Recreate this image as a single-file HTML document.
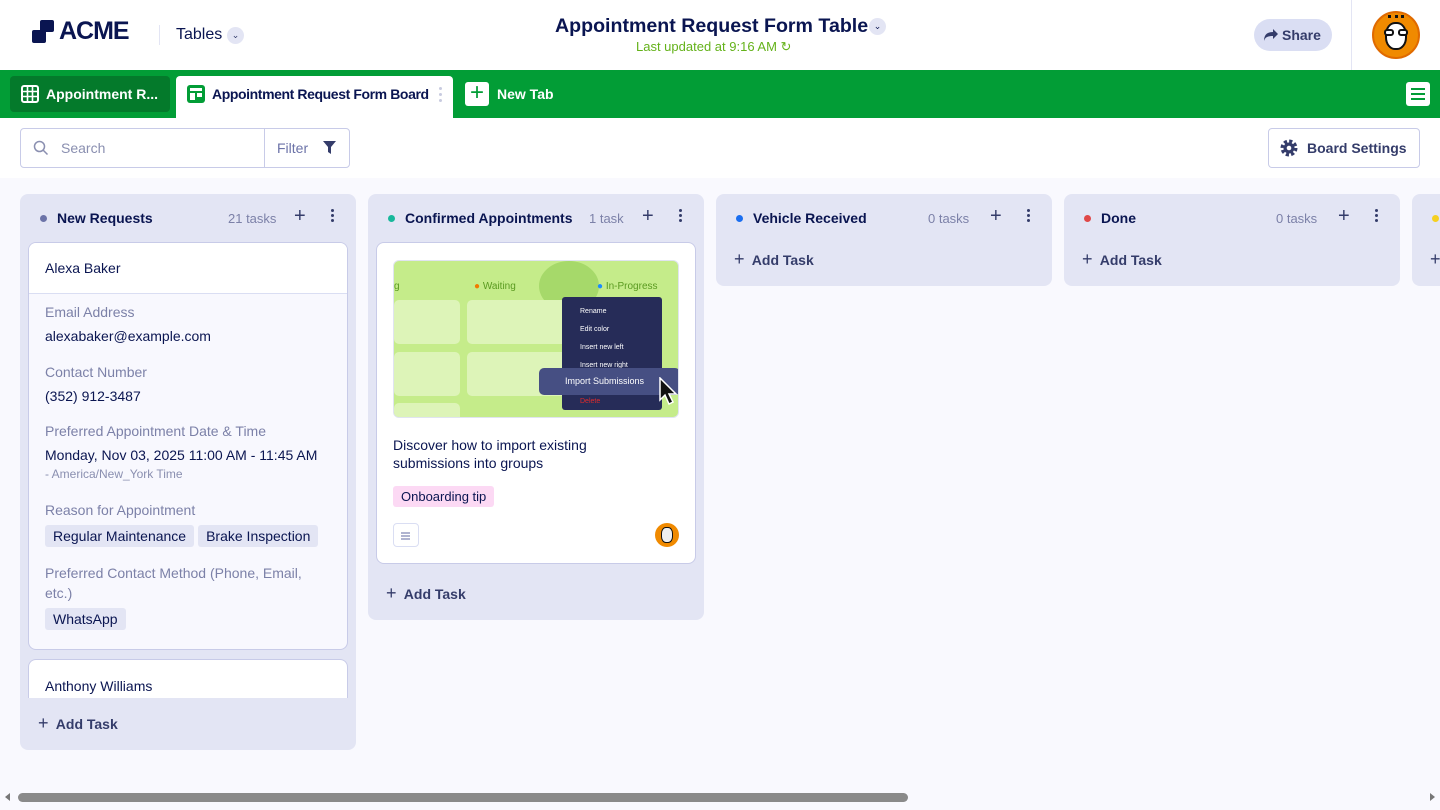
<!DOCTYPE html>
<html><head><meta charset="utf-8"><style>
*{box-sizing:border-box;margin:0;padding:0}
body{width:1440px;height:810px;overflow:hidden;background:#f9f9fe;font-family:"Liberation Sans",sans-serif;color:#0a1551;position:relative}
.hdr{position:absolute;left:0;top:0;width:1440px;height:70px;background:#fff}
.tabs{position:absolute;left:0;top:70px;width:1440px;height:48px;background:#029d36}
.toolbar{position:absolute;left:0;top:118px;width:1440px;height:60px;background:#fff}
.col{position:absolute;top:194px;width:336px;background:#e3e5f4;border-radius:8px}
.ch{position:absolute;top:16px;left:20px;right:16px;height:16px;font-size:14px;font-weight:bold;display:flex;align-items:center}
.dot{width:7px;height:7px;border-radius:50%;margin-right:10px}
.cnt{position:absolute;font-size:13px;color:#7c81a8;font-weight:normal;top:1px}
.plus{position:absolute;font-size:20px;font-weight:normal;color:#343c6a;top:-5px}
.kebab{position:absolute;top:-1px;width:3px}
.kebab i{display:block;width:3px;height:3px;border-radius:50%;background:#343c6a;margin-bottom:2px}
.add{position:absolute;font-size:14px;font-weight:bold;color:#343c6a}
.lab{font-size:14px;color:#7c81a8;margin-top:0}
.val{font-size:14px;color:#0a1551}
.tag{display:inline-block;background:#e3e5f4;border-radius:3px;padding:3px 8px;font-size:14px;margin-right:4px}
</style></head><body>
<div class="hdr">
  <svg style="position:absolute;left:31px;top:20px" width="26" height="24" viewBox="0 0 26 24"><rect x="9" y="0" width="14" height="12" rx="2" fill="#0a1551"/><rect x="1" y="10" width="14" height="13" rx="2" fill="#0a1551"/></svg>
  <div style="position:absolute;left:59px;top:17px;font-size:25px;font-weight:bold;letter-spacing:-1px;color:#0a1551">ACME</div>
  <div style="position:absolute;left:159px;top:25px;width:1px;height:20px;background:#e3e5f4"></div>
  <div style="position:absolute;left:176px;top:26px;font-size:16px">Tables</div>
  <div style="position:absolute;left:227px;top:27px;width:17px;height:17px;border-radius:50%;background:#e3e5f4;font-size:9px;text-align:center;line-height:17px;color:#343c6a">⌄</div>
  <div style="position:absolute;left:555px;top:15px;font-size:19.6px;font-weight:bold;color:#0a1551">Appointment Request Form Table</div>
  <div style="position:absolute;left:869px;top:18px;width:17px;height:17px;border-radius:50%;background:#e3e5f4;font-size:9px;text-align:center;line-height:17px">⌄</div>
  <div style="position:absolute;left:636px;top:39px;font-size:13px;color:#64b21a">Last updated at 9:16 AM ↻</div>
  <div style="position:absolute;left:1254px;top:19px;width:78px;height:32px;border-radius:16px;background:#dadef3;font-size:14px;font-weight:bold;color:#343c6a;line-height:32px;padding-left:28px">Share</div>
  <svg style="position:absolute;left:1263px;top:28px" width="16" height="14" viewBox="0 0 16 14"><path d="M10 1l5 5-5 5V8C5 8 2 9 1 13 1 7 4 4 10 4z" fill="#343c6a"/></svg>
  <div style="position:absolute;left:1351px;top:0;width:1px;height:70px;background:#e3e5f4"></div>
  <div style="position:absolute;left:1372px;top:11px;width:48px;height:48px;border-radius:50%;background:#f08a00;border:2px solid #e06a00"></div>
  <div style="position:absolute;left:1385px;top:22px;width:22px;height:28px;border-radius:45%;background:#fff;border:2px solid #111"></div>
  <div style="position:absolute;left:1384px;top:29px;width:10px;height:7px;border:2px solid #111;border-radius:3px;background:#fff"></div>
  <div style="position:absolute;left:1398px;top:29px;width:10px;height:7px;border:2px solid #111;border-radius:3px;background:#fff"></div>
  <div style="position:absolute;left:1388px;top:15px;width:16px;height:8px;border-top:3px dotted #111"></div>
</div>
<div class="tabs">
  <div style="position:absolute;left:10px;top:6px;width:160px;height:36px;background:#047a2b;border-radius:4px;color:#fff;font-size:14px;font-weight:bold;line-height:36px;padding-left:36px">Appointment R...</div>
  <svg style="position:absolute;left:21px;top:15px" width="18" height="18" viewBox="0 0 18 18"><rect x="1" y="1" width="16" height="16" rx="2" fill="none" stroke="#fff" stroke-width="2"/><path d="M1 6.5h16M1 11.5h16M6.5 1v16M11.5 1v16" stroke="#fff" stroke-width="1.6"/></svg>
  <div style="position:absolute;left:176px;top:6px;width:277px;height:42px;background:#fff;border-radius:4px 4px 0 0;font-size:14px;letter-spacing:-0.4px;font-weight:bold;line-height:36px;padding-left:36px">Appointment Request Form Board</div>
  <svg style="position:absolute;left:187px;top:15px" width="18" height="18" viewBox="0 0 18 18"><rect x="0" y="0" width="18" height="18" rx="3" fill="#029d36"/><rect x="3" y="3" width="12" height="3" fill="#fff"/><rect x="3" y="8" width="5" height="7" fill="#fff"/><rect x="10" y="8" width="5" height="4" fill="#fff"/></svg>
  <div style="position:absolute;left:439px;top:17px;width:3px"><i style="display:block;width:3px;height:3px;background:#c8cbe0;border-radius:50%;margin-bottom:3px"></i><i style="display:block;width:3px;height:3px;background:#c8cbe0;border-radius:50%;margin-bottom:3px"></i><i style="display:block;width:3px;height:3px;background:#c8cbe0;border-radius:50%"></i></div>
  <div style="position:absolute;left:465px;top:12px;width:24px;height:24px;background:#fff;border-radius:3px;color:#029d36;font-size:24px;line-height:22px;text-align:center">+</div>
  <div style="position:absolute;left:497px;top:16px;color:#fff;font-size:14px;font-weight:bold">New Tab</div>
  <div style="position:absolute;left:1406px;top:12px;width:24px;height:24px;background:#fff;border-radius:3px"><div style="margin:6px 5px;height:2px;background:#029d36;box-shadow:0 5px 0 #029d36,0 10px 0 #029d36"></div></div>
</div>
<div class="toolbar">
  <div style="position:absolute;left:20px;top:10px;width:330px;height:40px;border:1px solid #c8cbe8;border-radius:4px"></div>
  <div style="position:absolute;left:264px;top:10px;width:1px;height:40px;background:#c8cbe8"></div>
  <svg style="position:absolute;left:33px;top:22px" width="16" height="16" viewBox="0 0 16 16"><circle cx="6.5" cy="6.5" r="5" fill="none" stroke="#8a8fb0" stroke-width="1.5"/><path d="M10 10l4.5 4.5" stroke="#8a8fb0" stroke-width="1.5"/></svg>
  <div style="position:absolute;left:61px;top:22px;font-size:14px;color:#8a8fb0">Search</div>
  <div style="position:absolute;left:277px;top:22px;font-size:14px;color:#6c73a8">Filter</div>
  <svg style="position:absolute;left:323px;top:23px" width="13" height="13" viewBox="0 0 13 13"><path d="M0 0h13L8 6v7L5 11V6z" fill="#343c6a"/></svg>
  <div style="position:absolute;left:1268px;top:10px;width:152px;height:40px;border:1px solid #c8cbe8;border-radius:4px;font-size:14px;font-weight:bold;color:#343c6a;line-height:38px;padding-left:38px">Board Settings</div>
  <svg style="position:absolute;left:1279px;top:20px" width="20" height="20" viewBox="0 0 20 20"><circle cx="10" cy="10" r="6.5" fill="none" stroke="#343c6a" stroke-width="4" stroke-dasharray="3 2.1"/><circle cx="10" cy="10" r="5.5" fill="#343c6a"/><circle cx="10" cy="10" r="2.3" fill="#fff"/></svg>
</div>

<div class="col" style="left:20px;height:556px">
  <div class="ch"><span class="dot" style="background:#6c73a8"></span>New Requests<span class="cnt" style="left:188px">21 tasks</span><span class="plus" style="left:254px">+</span><span class="kebab" style="left:291px"><i></i><i></i><i></i></span></div>
  <div style="position:absolute;left:8px;top:48px;width:320px;height:408px;background:#f8f8fe;border:1px solid #c8cbe8;border-radius:8px;overflow:hidden">
    <div style="height:51px;background:#fff;border-bottom:1px solid #dadef3;padding:17px 16px;font-size:14px">Alexa Baker</div>
    <div style="padding:10px 16px">
      <div class="lab">Email Address</div><div class="val" style="margin-top:8px">alexabaker@example.com</div>
      <div class="lab" style="margin-top:20px">Contact Number</div><div class="val" style="margin-top:8px">(352) 912-3487</div>
      <div class="lab" style="margin-top:19px">Preferred Appointment Date &amp; Time</div><div class="val" style="margin-top:8px">Monday, Nov 03, 2025 11:00 AM - 11:45 AM</div>
      <div style="font-size:12px;color:#8a8fb0;margin-top:4px">- America/New_York Time</div>
      <div class="lab" style="margin-top:21px">Reason for Appointment</div>
      <div style="margin-top:7px"><span class="tag">Regular Maintenance</span><span class="tag">Brake Inspection</span></div>
      <div class="lab" style="margin-top:16px;line-height:20px">Preferred Contact Method (Phone, Email, etc.)</div>
      <div style="margin-top:5px"><span class="tag">WhatsApp</span></div>
    </div>
  </div>
  <div style="position:absolute;left:8px;top:465px;width:320px;height:39px;background:#fff;border:1px solid #c8cbe8;border-bottom:none;border-radius:8px 8px 0 0;padding:18px 16px 0;font-size:14px">Anthony Williams</div>
  <div class="add" style="left:18px;top:519px"><span style="font-weight:normal;font-size:18px">+</span>&nbsp; Add Task</div>
</div>

<div class="col" style="left:368px;height:426px">
  <div class="ch"><span class="dot" style="background:#18b89b"></span>Confirmed Appointments<span class="cnt" style="left:201px">1 task</span><span class="plus" style="left:254px">+</span><span class="kebab" style="left:291px"><i></i><i></i><i></i></span></div>
  <div style="position:absolute;left:8px;top:48px;width:320px;height:322px;background:#fff;border:1px solid #c8cbe8;border-radius:8px">
    <div style="position:absolute;left:16px;top:17px;width:286px;height:158px;background:#c5ec8a;border-radius:6px;overflow:hidden;border:1px solid #e0e4f0">
      <div style="position:absolute;left:145px;top:0;width:60px;height:50px;border-radius:50%;background:#a6d96a"></div>
      <div style="position:absolute;left:0;top:20px;font-size:10px;color:#5a9a20">g</div>
      <div style="position:absolute;left:80px;top:20px;font-size:10px;color:#5a9a20"><span style="color:#f07b00">●</span> Waiting</div>
      <div style="position:absolute;left:203px;top:20px;font-size:10px;color:#5a9a20"><span style="color:#1a8cff">●</span> In-Progress</div>
      <div style="position:absolute;left:0;top:39px;width:66px;height:44px;background:#ddf4b8;border-radius:5px"></div>
      <div style="position:absolute;left:73px;top:39px;width:100px;height:44px;background:#ddf4b8;border-radius:5px"></div>
      <div style="position:absolute;left:0;top:91px;width:66px;height:44px;background:#ddf4b8;border-radius:5px"></div>
      <div style="position:absolute;left:73px;top:91px;width:100px;height:44px;background:#ddf4b8;border-radius:5px"></div>
      <div style="position:absolute;left:0;top:142px;width:66px;height:20px;background:#ddf4b8;border-radius:5px"></div>
      <div style="position:absolute;left:168px;top:36px;width:100px;height:113px;background:#262c58;border-radius:3px;font-size:7px;color:#fff;padding:6px 0 0 18px;line-height:18px">Rename<br>Edit color<br>Insert new left<br>Insert new right<br><br><span style="color:#e02b2b">Delete</span></div>
      <div style="position:absolute;left:145px;top:107px;width:141px;height:27px;background:#464f83;border-radius:5px;color:#fff;font-size:9px;line-height:27px;padding-left:26px">Import Submissions</div>
      <svg style="position:absolute;left:264px;top:116px" width="20" height="30" viewBox="0 0 20 30"><path d="M2 1v22l5-5 4 9 4-2-4-8h7z" fill="#111" stroke="#fff" stroke-width="1.5"/></svg>
    </div>
    <div style="position:absolute;left:16px;top:193px;font-size:14px;line-height:18px;width:260px">Discover how to import existing submissions into groups</div>
    <div style="position:absolute;left:16px;top:243px;background:#fcd9f4;border-radius:3px;padding:3px 8px;font-size:13px">Onboarding tip</div>
    <div style="position:absolute;left:16px;top:280px;width:26px;height:24px;border:1px solid #dadef3;border-radius:4px"><div style="margin:8px 7px;width:9px;height:1.5px;background:#b0b4d0;box-shadow:0 3px 0 #b0b4d0,0 6px 0 #b0b4d0"></div></div>
    <div style="position:absolute;left:278px;top:280px;width:24px;height:24px;border-radius:50%;background:#f08a00"><div style="margin:4px 6px;width:12px;height:16px;background:#eee;border:1.5px solid #111;border-radius:40%"></div></div>
  </div>
  <div class="add" style="left:18px;top:389px"><span style="font-weight:normal;font-size:18px">+</span>&nbsp; Add Task</div>
</div>

<div class="col" style="left:716px;height:92px">
  <div class="ch"><span class="dot" style="background:#1a6ef0"></span>Vehicle Received<span class="cnt" style="left:192px">0 tasks</span><span class="plus" style="left:254px">+</span><span class="kebab" style="left:291px"><i></i><i></i><i></i></span></div>
  <div class="add" style="left:18px;top:55px"><span style="font-weight:normal;font-size:18px">+</span>&nbsp; Add Task</div>
</div>
<div class="col" style="left:1064px;height:92px">
  <div class="ch"><span class="dot" style="background:#e04848"></span>Done<span class="cnt" style="left:192px">0 tasks</span><span class="plus" style="left:254px">+</span><span class="kebab" style="left:291px"><i></i><i></i><i></i></span></div>
  <div class="add" style="left:18px;top:55px"><span style="font-weight:normal;font-size:18px">+</span>&nbsp; Add Task</div>
</div>
<div class="col" style="left:1412px;height:92px">
  <div class="ch"><span class="dot" style="background:#f5d020"></span></div>
  <div class="add" style="left:18px;top:55px"><span style="font-weight:normal;font-size:18px">+</span></div>
</div>

<div style="position:absolute;left:0;top:790px;width:1440px;height:15px;background:#f9f9fe"></div>
<div style="position:absolute;left:5px;top:793px;width:0;height:0;border-top:4px solid transparent;border-bottom:4px solid transparent;border-right:5px solid #777"></div>
<div style="position:absolute;left:18px;top:793px;width:890px;height:9px;background:#8a8a8a;border-radius:5px"></div>
<div style="position:absolute;left:1430px;top:793px;width:0;height:0;border-top:4px solid transparent;border-bottom:4px solid transparent;border-left:5px solid #777"></div>
</body></html>
